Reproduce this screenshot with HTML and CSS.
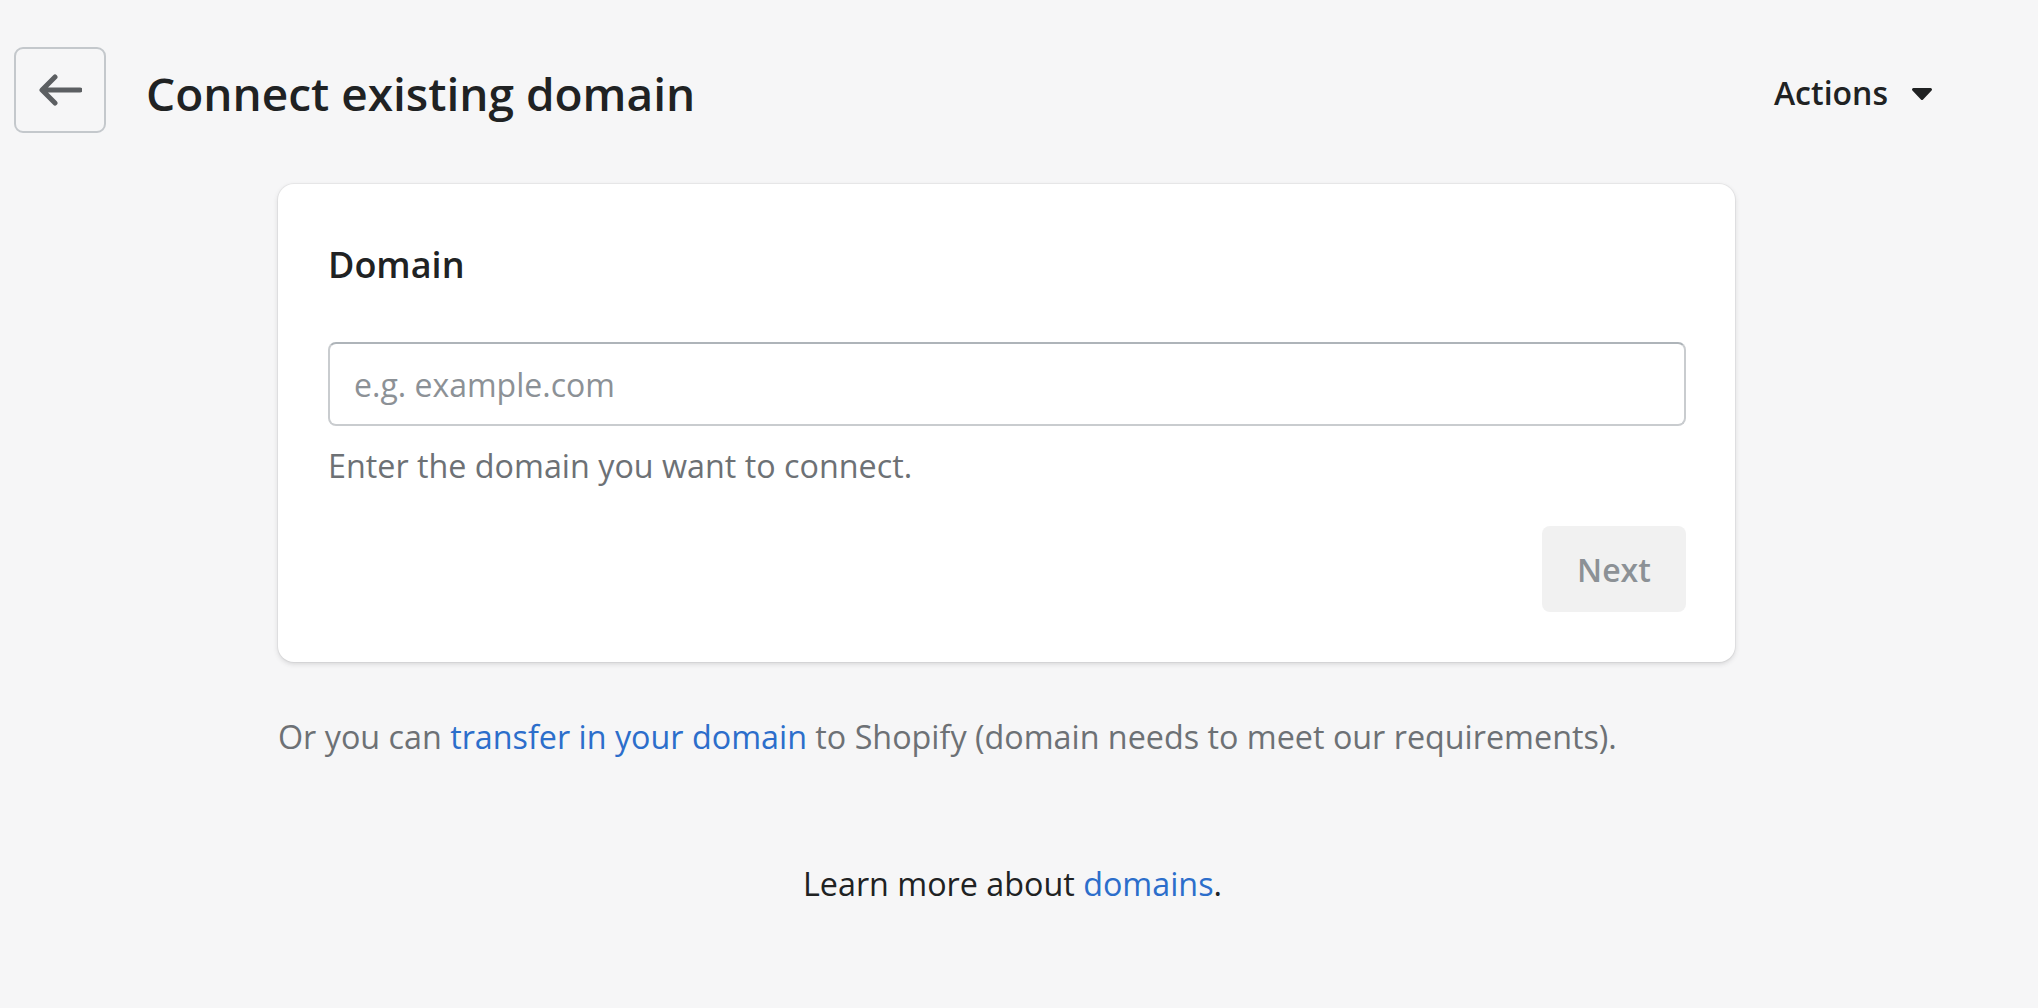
FILE: index.html
```html
<!DOCTYPE html>
<html>
<head>
<meta charset="utf-8">
<link rel="stylesheet" href="styles.css">
</head>
<body>
<div class="page">
  <header class="header">
    <button class="back" aria-label="Back">
      <svg viewBox="0 0 44 34" width="44" height="34"><path d="M42 17H5M17 4L4 17l13 13" fill="none" stroke="#5c5f62" stroke-width="5" stroke-linecap="round" stroke-linejoin="round"/></svg>
    </button>
    <h1 class="title">Connect existing domain</h1>
    <div class="actions">
      <span>Actions</span>
      <svg class="caret" viewBox="0 0 20 12" width="20" height="12"><path d="M1.5 0h17a1.5 1.5 0 0 1 1.1 2.5L11.1 11.4a1.5 1.5 0 0 1-2.2 0L.4 2.5A1.5 1.5 0 0 1 1.5 0z" fill="#202223"/></svg>
    </div>
  </header>
  <main class="content">
    <section class="card">
      <h2 class="card-title">Domain</h2>
      <div class="field">
        <input class="input" type="text" placeholder="e.g. example.com">
      </div>
      <p class="help">Enter the domain you want to connect.</p>
      <div class="card-footer">
        <button class="next" disabled>Next</button>
      </div>
    </section>
    <p class="note">Or you can <a href="#">transfer in your domain</a> to Shopify (domain needs to meet our requirements).</p>
    <p class="learn">Learn more about <a href="#">domains</a>.</p>
  </main>
</div>
</body>
</html>
```
FILE: styles.css
```css
* { box-sizing: border-box; }
html, body {
  margin: 0;
  background: #f6f6f7;
  font-family: "Open Sans", "Noto Sans", sans-serif;
  color: #202223;
}
.page {
  width: 2038px;
  height: 1008px;
  overflow: hidden;
}
.header {
  display: flex;
  align-items: center;
  padding: 47px 106px 0 14px;
}
.back {
  width: 92px;
  height: 86px;
  border: 2px solid #c4c8cc;
  border-radius: 9px;
  background: transparent;
  display: flex;
  align-items: center;
  justify-content: center;
  padding: 0;
}
.title {
  margin: 5px 0 0 40px;
  font-size: 46px;
  font-weight: 600;
  flex: 1;
}
.actions {
  display: flex;
  align-items: center;
  gap: 24px;
  margin-top: 5px;
  font-size: 32px;
  font-weight: 600;
}
.caret { margin-top: 2px; }
.content {
  margin: 51px 0 0 278px;
  width: 1457px;
}
.card {
  background: #fff;
  border-radius: 16px;
  box-shadow: 0 0 0 1px rgba(63,63,68,.05), 0 2px 5px rgba(63,63,68,.18);
  padding: 56px 49px 50px 50px;
}
.card-title {
  margin: 0;
  font-size: 36px;
  font-weight: 600;
  line-height: 50px;
}
.field { margin-top: 52px; }
.input {
  width: 100%;
  height: 84px;
  border: 2px solid #c9cccf;
  border-top-color: #aeb4b9;
  border-radius: 8px;
  padding: 0 24px;
  font-family: inherit;
  font-size: 32px;
  color: #202223;
  background: #fff;
  outline: none;
}
.input::placeholder { color: #8c9196; }
.help {
  margin: 18px 0 0;
  font-size: 32.3px;
  line-height: 42px;
  color: #6d7175;
}
.card-footer {
  display: flex;
  justify-content: flex-end;
  margin-top: 40px;
}
.next {
  width: 144px;
  height: 86px;
  border: none;
  border-radius: 8px;
  background: #f1f1f1;
  color: #8c9196;
  font-family: inherit;
  font-size: 32px;
  font-weight: 600;
}
.note {
  margin: 53px 0 0;
  font-size: 32.3px;
  line-height: 42px;
  color: #6d7175;
}
a { color: #2c6ecb; text-decoration: none; }
.learn {
  margin: 105px 0 0;
  padding-left: 12px;
  text-align: center;
  font-size: 32.3px;
  line-height: 42px;
  color: #202223;
}
```
